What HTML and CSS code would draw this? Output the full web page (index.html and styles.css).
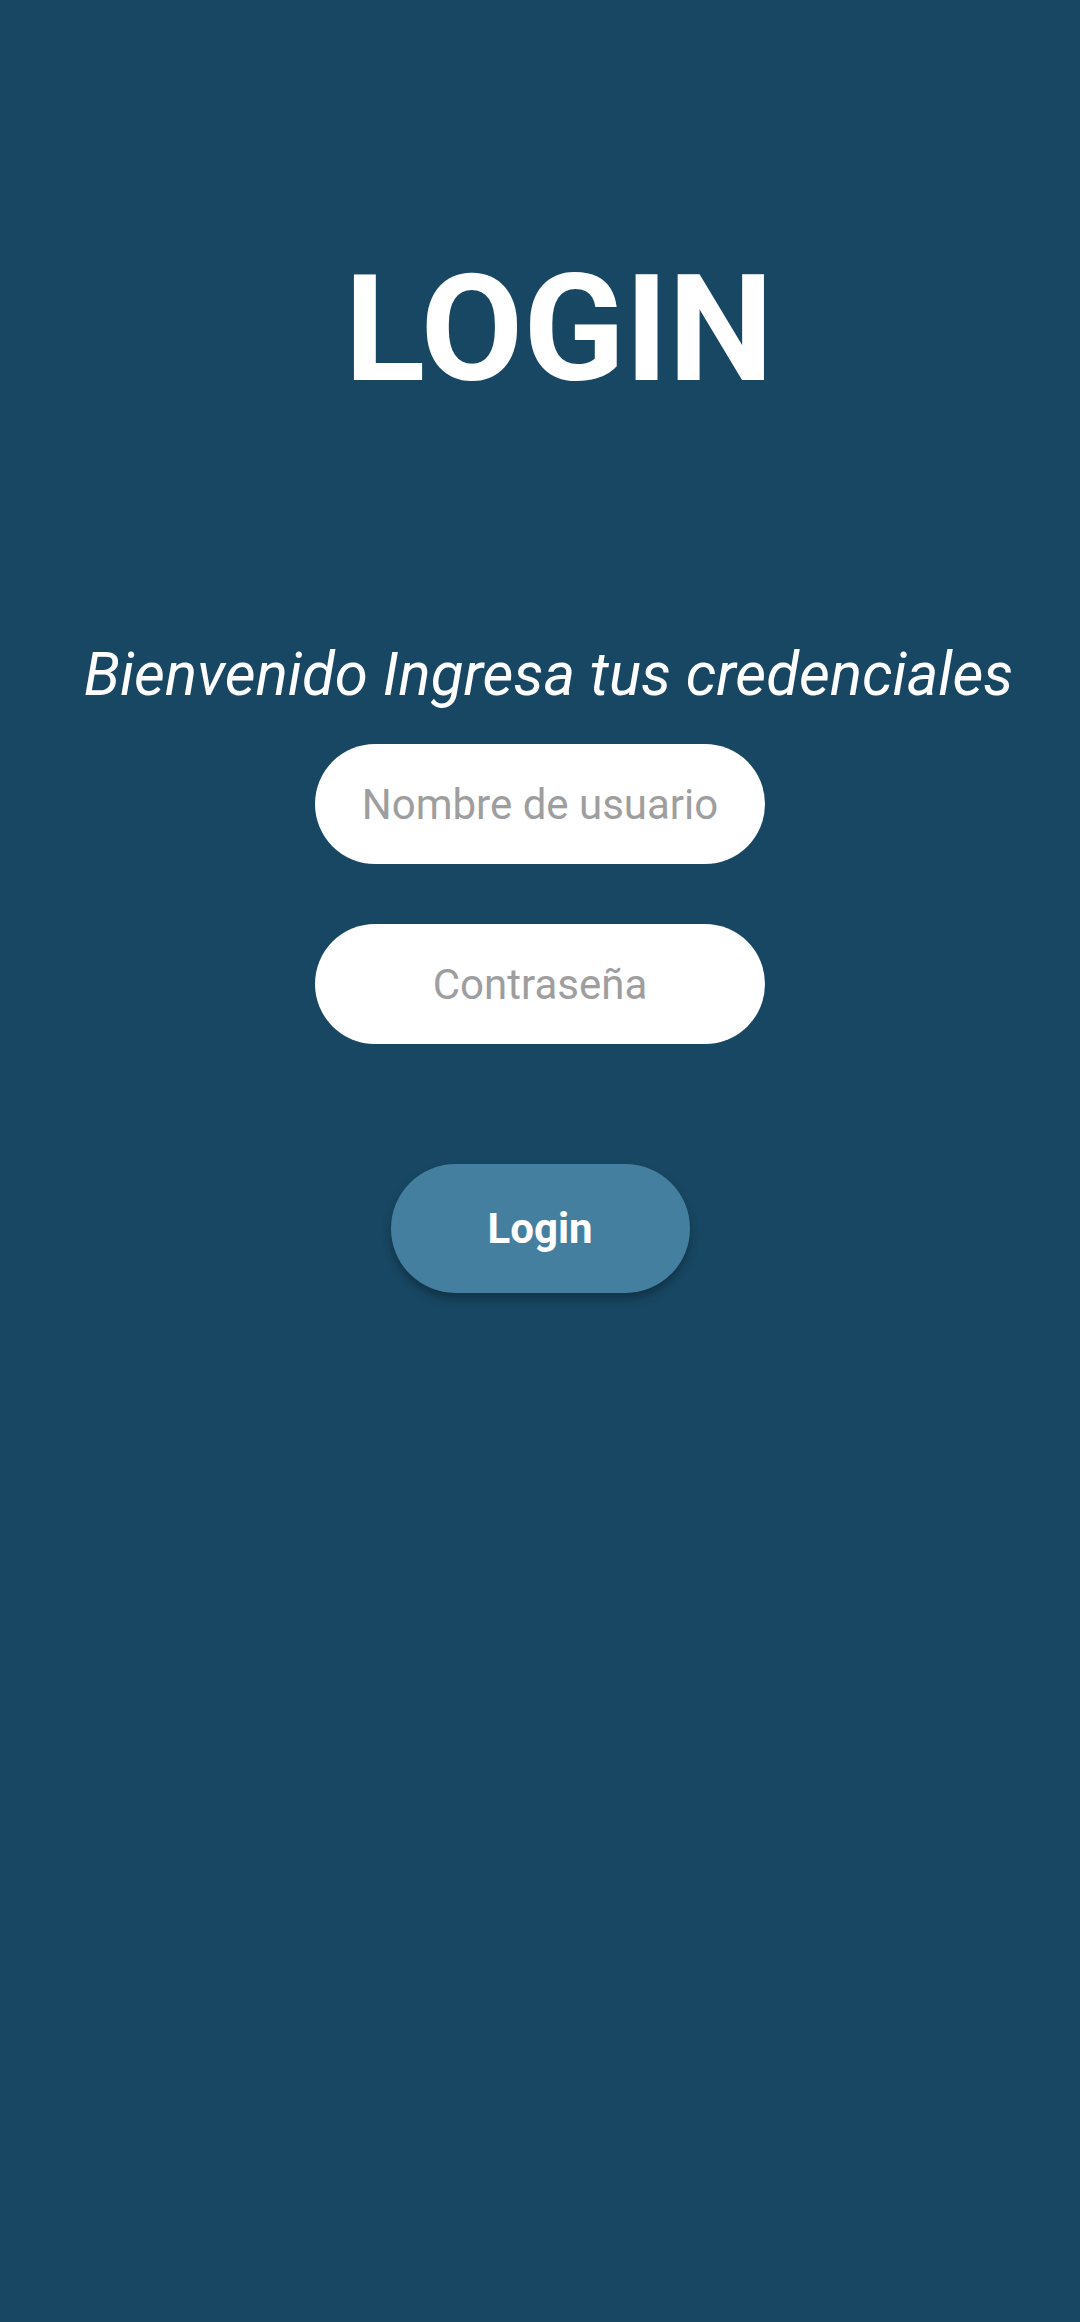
FILE: index.html
```html
<!DOCTYPE html>
<html lang="es">
<head>
<meta charset="utf-8">
<link rel="stylesheet" href="styles.css">
</head>
<body>
<main class="screen">
  <h1 class="title">LOGIN</h1>
  <p class="subtitle">Bienvenido Ingresa tus credenciales</p>
  <form class="form">
    <input class="field" type="text" placeholder="Nombre de usuario">
    <input class="field" type="password" placeholder="Contraseña">
    <button class="btn" type="button">Login</button>
  </form>
</main>
</body>
</html>
```
FILE: styles.css
```css
html, body {
  margin: 0;
  padding: 0;
  background: #184763;
}
.screen {
  width: 1080px;
  height: 2322px;
  display: flex;
  flex-direction: column;
  align-items: center;
  font-family: Roboto, "Noto Sans", sans-serif;
  color: #fff;
}
.title {
  margin: 255px 0 0;
  padding-left: 38px;
  font-size: 149px;
  line-height: 1;
  font-weight: 700;
  letter-spacing: 0;
}
.subtitle {
  margin: 241px 0 0;
  padding-left: 17px;
  font-size: 60px;
  line-height: 1;
  font-style: italic;
  font-weight: 400;
}
.form {
  margin-top: 39px;
  display: flex;
  flex-direction: column;
  align-items: center;
}
.field {
  box-sizing: border-box;
  width: 450px;
  height: 120px;
  border: none;
  border-radius: 60px;
  background: #fff;
  text-align: center;
  font-family: Roboto, sans-serif;
  font-size: 42px;
  color: #333;
  outline: none;
  padding: 0 10px;
}
.field::placeholder {
  color: #9e9e9e;
}
.field + .field {
  margin-top: 60px;
}
.btn {
  margin-top: 120px;
  width: 299px;
  height: 129px;
  border: none;
  border-radius: 65px;
  background: #457f9f;
  color: #fff;
  font-family: Roboto, sans-serif;
  font-weight: 700;
  font-size: 42px;
  box-shadow: 0 6px 10px rgba(0, 0, 0, 0.28);
}
```
